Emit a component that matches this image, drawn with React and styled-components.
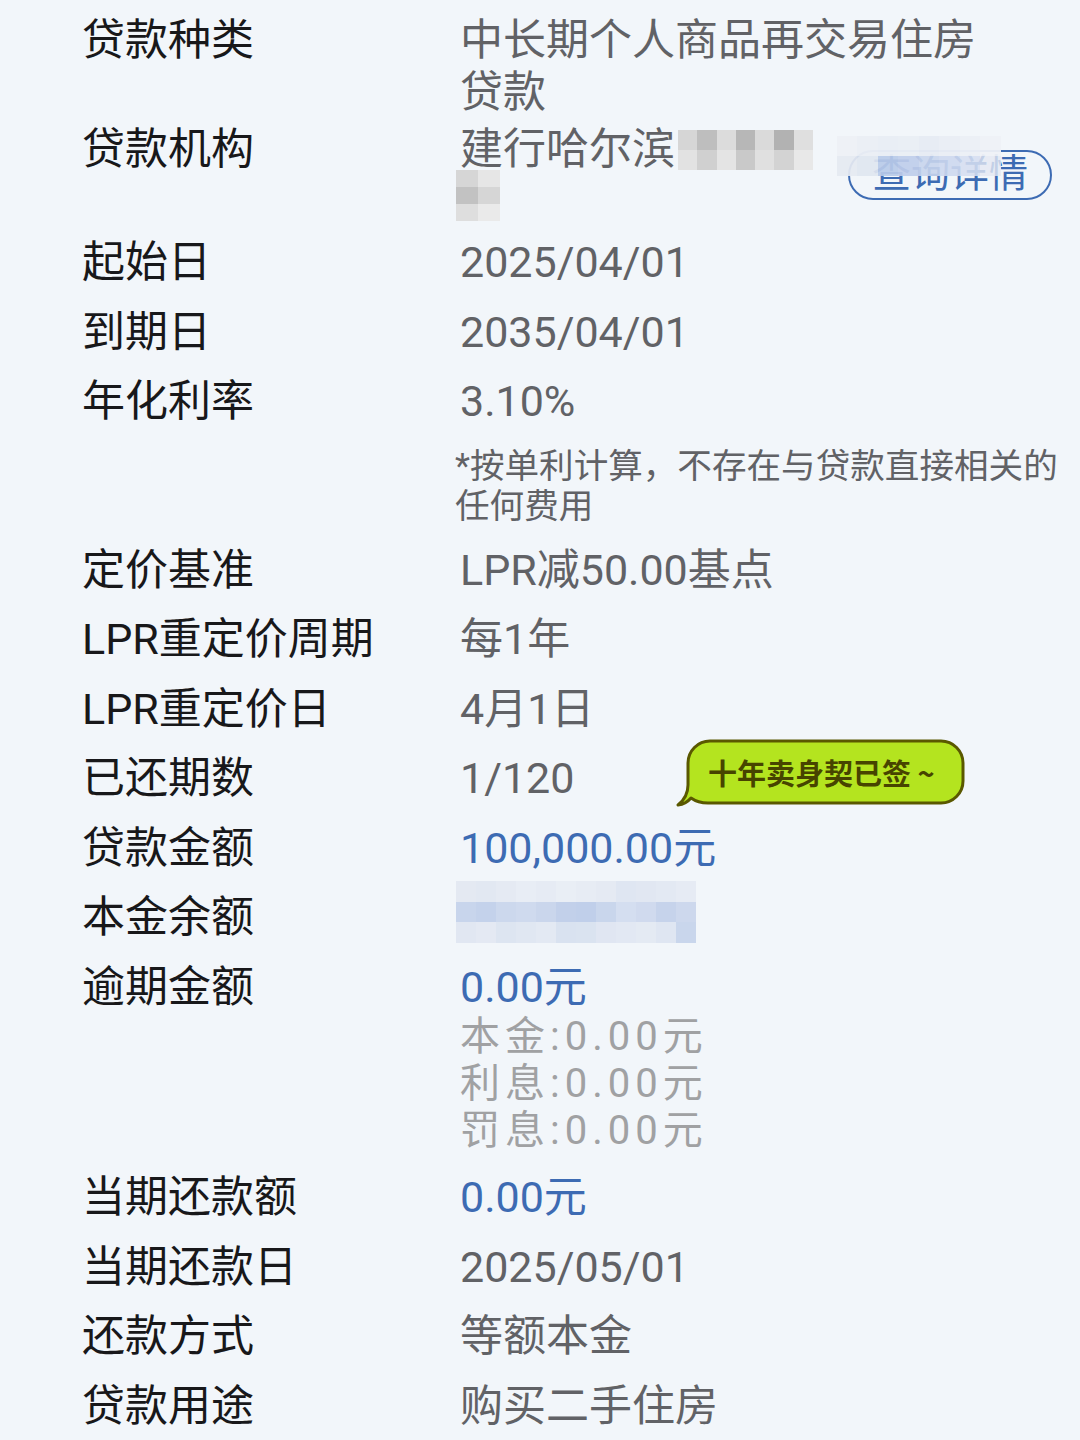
import React from "react";
import styled, { createGlobalStyle } from "styled-components";

const GlobalStyle = createGlobalStyle`
  html, body { margin: 0; padding: 0; background: #f2f6fa; }
  body { font-family: Roboto, "Noto Sans CJK SC", sans-serif; }
`;

const Page = styled.div`
  box-sizing: border-box;
  min-height: 1440px;
  padding: 5.25px 18px 0 82px;
  background: #f2f6fa;
`;

const Row = styled.div`
  display: grid;
  grid-template-columns: 378px 1fr;
  padding: 8.75px 0;
  margin-bottom: ${(p) => p.$mb || "0"};
`;

const Label = styled.div`
  font-size: 43px;
  line-height: 52px;
  color: #18181a;
  white-space: nowrap;
`;

const Value = styled.div`
  position: relative;
  font-size: 43px;
  line-height: 52px;
  color: ${(p) => (p.$tone === "blue" ? "#3d6bb3" : "#616266")};
  max-width: ${(p) => p.$maxw || "none"};
`;

const Note = styled.div`
  margin: 19px 0 0 -5px;
  font-size: 34.6px;
  line-height: 40px;
  color: #616266;
`;

const Sub = styled.div`
  font-size: 40px;
  line-height: 47px;
  color: #a0a1a3;
  letter-spacing: 5px;
`;

const OrgGrid = styled.div`
  display: grid;
  grid-template-columns: 1fr auto;
  grid-template-rows: 52px 43.5px;
  font-size: 43px;
  line-height: 52px;
  color: #616266;
`;

const OrgLine = styled.div`
  grid-column: 1;
  grid-row: 1;
  display: flex;
  align-items: center;
`;

const OrgSecond = styled.div`
  grid-column: 1;
  grid-row: 2;
  margin: -5px 0 0 -4px;
`;

const QueryButton = styled.div`
  grid-column: 2;
  grid-row: 1 / 3;
  align-self: end;
  position: relative;
  box-sizing: border-box;
  height: 50px;
  margin: 0 10px 19px 0;
  padding: 0 22px;
  display: flex;
  align-items: center;
  border: 2.5px solid #3d6bb3;
  border-radius: 25px;
  font-size: 39px;
  line-height: 45px;
  color: #3d6bb3;
`;

const Overlay = styled.div`
  position: absolute;
  left: ${(p) => p.$x};
  top: ${(p) => p.$y};
`;

const Mosaic = styled.div`
  display: grid;
  grid-template-columns: repeat(${(p) => p.$cols}, ${(p) => p.$w}px);
  grid-auto-rows: ${(p) => p.$h}px;
  margin: ${(p) => p.$m || "0"};
`;

const Cell = styled.div`
  background: ${(p) => p.$c};
`;

const Bubble = styled.div`
  position: absolute;
  left: 216px;
  top: -13px;
  width: 290px;
  height: 68px;
  display: grid;
`;

const BubbleShape = styled.svg`
  grid-area: 1 / 1;
  width: 290px;
  height: 68px;
`;

const BubbleText = styled.span`
  grid-area: 1 / 1;
  align-self: center;
  justify-self: start;
  padding: 0 0 2px 32px;
  font-family: "Noto Sans CJK SC", sans-serif;
  font-weight: 700;
  font-size: 29px;
  line-height: 34px;
  color: #474400;
  white-space: nowrap;
`;

const MosaicBlock = ({ cols, w, h, m, colors }) => (
  <Mosaic $cols={cols} $w={w} $h={h} $m={m}>
    {colors.map((c, i) => (
      <Cell key={i} $c={c} />
    ))}
  </Mosaic>
);

const orgColors = [
  "#d6d6d6", "#bebebe", "#dcdcdc", "#b7b7b7", "#dadada", "#b2b2b2", "#dfdfdf",
  "#e2e2e2", "#d0d0d0", "#e4e4e4", "#c9c9c9", "#e0e0e0", "#d3d3d3", "#e8e8e8",
];

const secondColors = ["#d6d6d6", "#e6e6e6", "#c2c2c2", "#d6d6d6", "#dedede", "#eaeaea"];

const buttonCover = [
  "rgba(237,241,246,0.97)", "rgba(234,238,245,0.97)", "rgba(232,237,245,0.97)", "rgba(233,238,245,0.97)",
  "rgba(230,235,244,0.97)", "rgba(233,237,245,0.97)", "rgba(235,239,246,0.97)", "rgba(238,241,247,0.95)",
  "rgba(229,233,241,0.93)", "rgba(224,230,240,0.93)", "rgba(185,202,232,0.92)", "rgba(191,205,234,0.92)",
  "rgba(200,213,236,0.9)", "rgba(205,216,238,0.9)", "rgba(213,222,240,0.88)", "rgba(227,232,242,0.8)",
];

const balanceColors = [
  "#e4e9f2", "#e2e8f2", "#e5eaf3", "#e8edf5", "#e6ebf4", "#e9eef5", "#e7ecf4", "#e5eaf3", "#dfe6f2", "#e1e7f2", "#e3e9f3", "#e6ebf4",
  "#c8d5ec", "#c4d2eb", "#ccd8ed", "#cfdaee", "#cad6ec", "#c2d0ea", "#c0cfea", "#c9d6ec", "#d4def0", "#d0daee", "#c6d3eb", "#cdd8ed",
  "#e1e7f2", "#e4e9f3", "#dde5f1", "#e0e7f2", "#e3e9f3", "#d9e2f0", "#dae3f0", "#e0e6f2", "#e2e8f3", "#e4eaf3", "#dfe6f2", "#c9d6ec",
];

const simpleRows = (items) =>
  items.map(([l, v, tone]) => (
    <Row key={l}>
      <Label>{l}</Label>
      <Value $tone={tone}>{v}</Value>
    </Row>
  ));

export default function App() {
  return (
    <>
      <GlobalStyle />
      <Page>
        <Row $mb="-12.5px">
          <Label>贷款种类</Label>
          <Value $maxw="540px">中长期个人商品再交易住房贷款</Value>
        </Row>
        <Row>
          <Label>贷款机构</Label>
          <OrgGrid>
            <OrgLine>
              <span>建行哈尔滨</span>
              <MosaicBlock cols={7} w={19.3} h={20} m="2px 0 0 3px" colors={orgColors} />
            </OrgLine>
            <OrgSecond>
              <MosaicBlock cols={2} w={22} h={17} colors={secondColors} />
            </OrgSecond>
            <QueryButton>
              查询详情
              <Overlay $x="-13px" $y="-16px">
                <MosaicBlock cols={8} w={20.5} h={20} colors={buttonCover} />
              </Overlay>
            </QueryButton>
          </OrgGrid>
        </Row>
        {simpleRows([
          ["起始日", "2025/04/01"],
          ["到期日", "2035/04/01"],
        ])}
        <Row>
          <Label>年化利率</Label>
          <Value>
            3.10%
            <Note>*按单利计算，不存在与贷款直接相关的任何费用</Note>
          </Value>
        </Row>
        {simpleRows([
          ["定价基准", "LPR减50.00基点"],
          ["LPR重定价周期", "每1年"],
          ["LPR重定价日", "4月1日"],
        ])}
        <Row>
          <Label>已还期数</Label>
          <Value>
            1/120
            <Bubble>
              <BubbleShape viewBox="0 0 290 68">
                <path
                  d="M34 2 H265 A22 22 0 0 1 287 24 V42 A22 22 0 0 1 265 64 H32 Q22 64 15 59 Q10 65 2 66 Q12 58 12 46 V24 A22 22 0 0 1 34 2 Z"
                  fill="#b4e41f"
                  stroke="#5a5800"
                  strokeWidth="3"
                  strokeLinejoin="round"
                />
              </BubbleShape>
              <BubbleText>十年卖身契已签 ~</BubbleText>
            </Bubble>
          </Value>
        </Row>
        {simpleRows([["贷款金额", "100,000.00元", "blue"]])}
        <Row>
          <Label>本金余额</Label>
          <Value>
            <MosaicBlock cols={12} w={20} h={20.67} m="-10px 0 0 -4px" colors={balanceColors} />
          </Value>
        </Row>
        <Row>
          <Label>逾期金额</Label>
          <Value $tone="blue">
            0.00元
            <Sub>本金:0.00元</Sub>
            <Sub>利息:0.00元</Sub>
            <Sub>罚息:0.00元</Sub>
          </Value>
        </Row>
        {simpleRows([
          ["当期还款额", "0.00元", "blue"],
          ["当期还款日", "2025/05/01"],
          ["还款方式", "等额本金"],
          ["贷款用途", "购买二手住房"],
        ])}
      </Page>
    </>
  );
}
